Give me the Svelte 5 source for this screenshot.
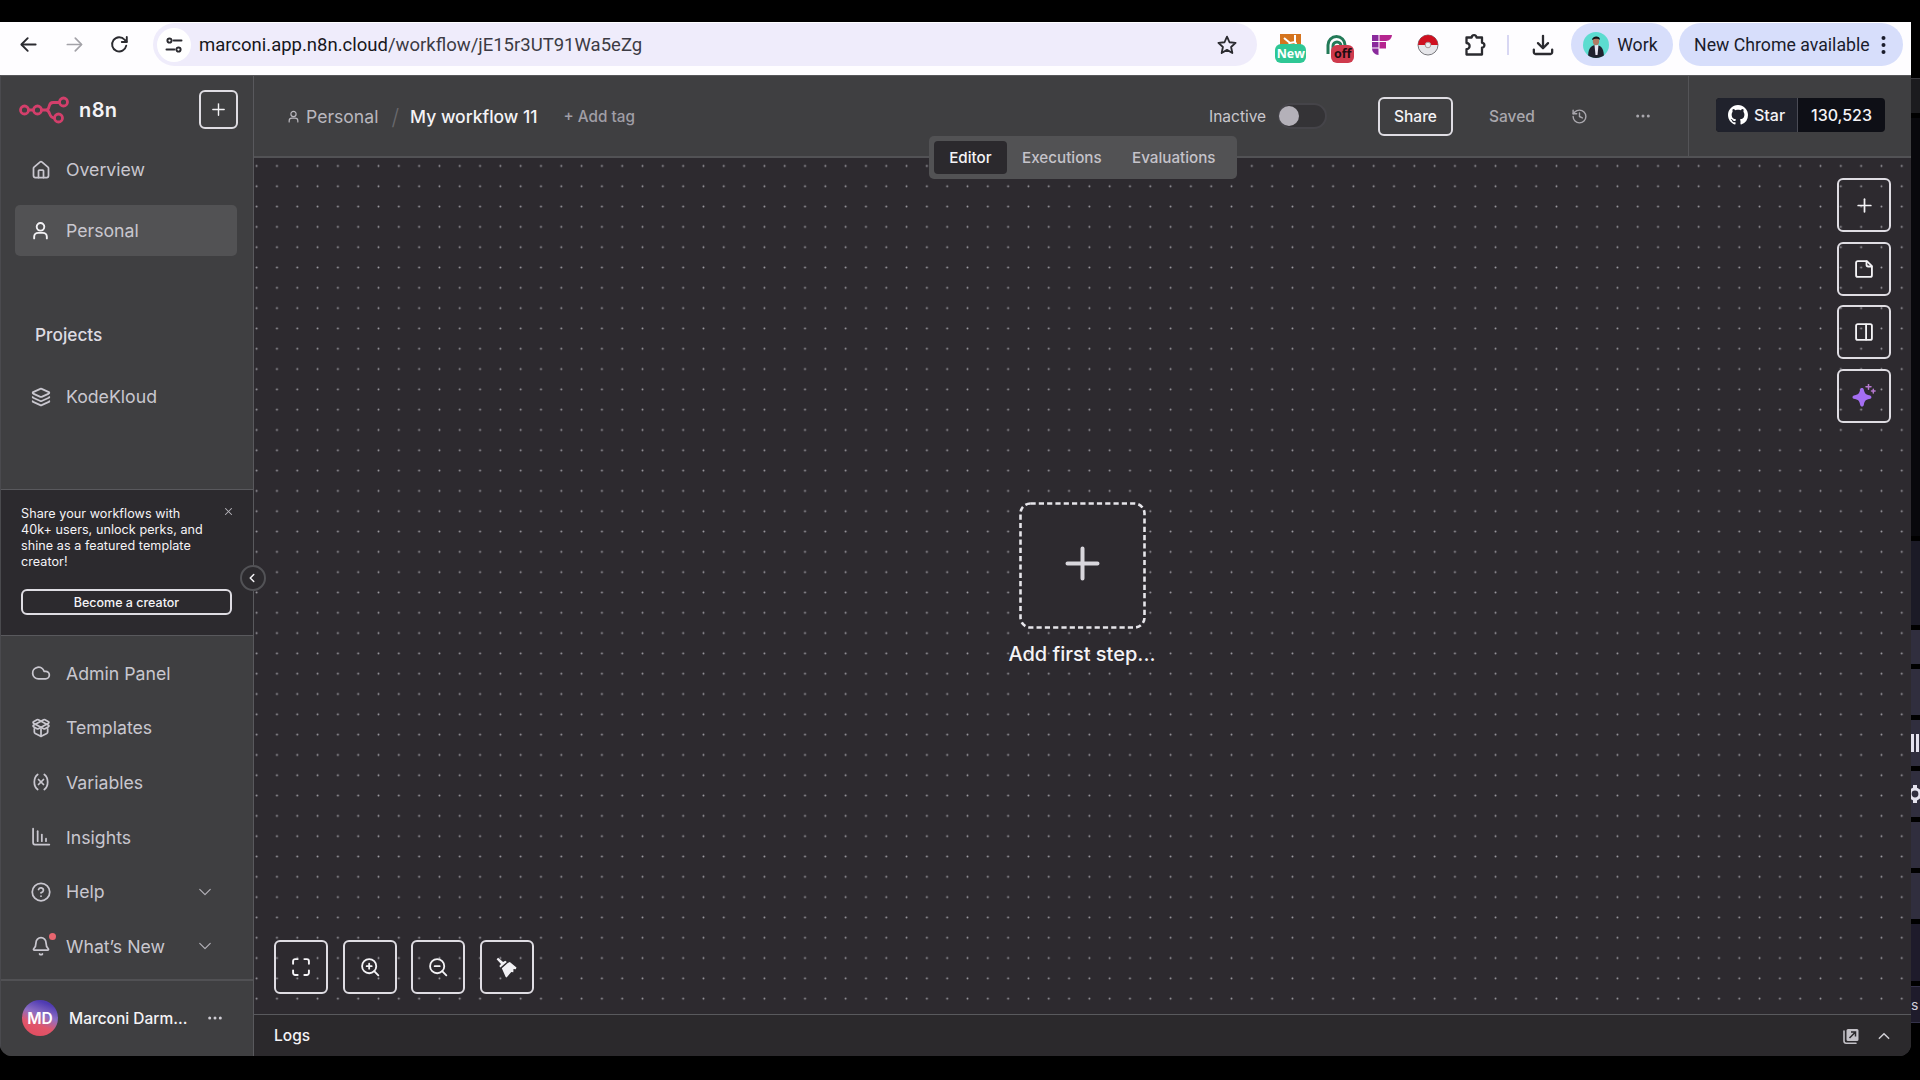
<script lang="ts">
  interface NavItem {
    icon: string;
    label: string;
    expandable?: boolean;
    dot?: boolean;
  }

  // 24x24 stroke icons
  const icons: Record<string, string[]> = {
    home: ['M15 21v-8a1 1 0 0 0-1-1h-4a1 1 0 0 0-1 1v8', 'M3 10a2 2 0 0 1 .7-1.5l7-6a2 2 0 0 1 2.6 0l7 6A2 2 0 0 1 21 10v9a2 2 0 0 1-2 2H5a2 2 0 0 1-2-2z'],
    user: ['M12 2.5a4.8 4.8 0 1 0 0 9.6a4.8 4.8 0 1 0 0-9.6', 'M4 22v-2a5 5 0 0 1 5-5h6a5 5 0 0 1 5 5v2'],
    layers: ['m12.8 2.2a2 2 0 0 0-1.6 0L2.6 6.1a1 1 0 0 0 0 1.8l8.6 3.9a2 2 0 0 0 1.6 0l8.6-3.9a1 1 0 0 0 0-1.8Z', 'M2 12a1 1 0 0 0 .6.9l8.6 3.9a2 2 0 0 0 1.6 0l8.6-3.9A1 1 0 0 0 22 12', 'M2 17a1 1 0 0 0 .6.9l8.6 3.9a2 2 0 0 0 1.6 0l8.6-3.9A1 1 0 0 0 22 17'],
    cloud: ['M17.5 19H9a7 7 0 1 1 6.7-9h1.8a4.5 4.5 0 1 1 0 9Z'],
    box: ['M12 22v-9', 'M15.2 2.2a1.7 1.7 0 0 1 1.6 0L21 4.6a.9.9 0 0 1 0 1.6L8.8 12.8a1.7 1.7 0 0 1-1.6 0L3 10.4a.9.9 0 0 1 0-1.6z', 'M20 13v3.9a2 2 0 0 1-1.1 1.8l-6 3a1.9 1.9 0 0 1-1.8 0l-6-3A2 2 0 0 1 4 16.9V13', 'M21 10.4a.9.9 0 0 0 0-1.6L8.8 2.2a1.8 1.8 0 0 0-1.6 0L3 4.6a.9.9 0 0 0 0 1.6l12.2 6.6a1.8 1.8 0 0 0 1.6 0z'],
    variable: ['M8 21s-4-3-4-9 4-9 4-9', 'M16 3s4 3 4 9-4 9-4 9', 'M15 9l-6 6', 'M9 9l6 6'],
    chart: ['M2.5 2v17a2 2 0 0 0 2 2H22', 'M8 17V5', 'M13 17V9', 'M18 17v-3'],
    help: ['M12 1.5a10.5 10.5 0 1 0 0 21a10.5 10.5 0 1 0 0-21', 'M9.1 9a3 3 0 0 1 5.8 1c0 2-3 3-3 3', 'M12 17h.01'],
    bell: ['M10.3 21.5a2 2 0 0 0 3.4 0', 'M3.3 15.3A1 1 0 0 0 4 17h16a1 1 0 0 0 .7-1.7C19.4 14 18 12.5 18 8A6 6 0 0 0 6 8c0 4.5-1.4 6-2.7 7.3'],
    plus: ['M4 12h16', 'M12 4v16'],
    note: ['M15.5 2.5H4.5a2 2 0 0 0-2 2v15a2 2 0 0 0 2 2h15a2 2 0 0 0 2-2V8.5Z', 'M15 3v4a2 2 0 0 0 2 2h4'],
    panel: ['M4.5 2.5h15a2 2 0 0 1 2 2v15a2 2 0 0 1-2 2h-15a2 2 0 0 1-2-2v-15a2 2 0 0 1 2-2z', 'M14.5 3v18'],
    fit: ['M8 2.5H5a2.5 2.5 0 0 0-2.5 2.5v3', 'M21.5 8V5A2.5 2.5 0 0 0 19 2.5h-3', 'M2.5 16v3A2.5 2.5 0 0 0 5 21.5h3', 'M16 21.5h3a2.5 2.5 0 0 0 2.5-2.5v-3'],
    zoomIn: ['M11 2.5a8.5 8.5 0 1 0 0 17a8.5 8.5 0 1 0 0-17', 'M22 22l-5-5', 'M11 8v6', 'M8 11h6'],
    zoomOut: ['M11 2.5a8.5 8.5 0 1 0 0 17a8.5 8.5 0 1 0 0-17', 'M22 22l-5-5', 'M8 11h6'],
    history: ['M3 12a9 9 0 1 0 9-9 9.7 9.7 0 0 0-6.7 2.7L3 8', 'M3 3v5h5', 'M12 7v5l4 2'],
    chevronDown: ['m3 7.5 9 9 9-9'],
    chevronUp: ['m4 16 8-8 8 8'],
    chevronLeft: ['m15 18-6-6 6-6'],
    close: ['M20 4 4 20', 'm4 4 16 16'],
    back: ['M21 12H4', 'm11 4-8 8 8 8'],
    forward: ['M3 12h17', 'm13 4 8 8-8 8'],
    reload: ['M20.5 13.5A9 9 0 1 1 18.5 6L21 8.5', 'M21.2 2.5v6.3h-6.3'],
    star: ['m12 2 3 6.7 7.3.8-5.4 4.9 1.5 7.2L12 17.9l-6.4 3.7 1.5-7.2L1.7 9.5l7.3-.8z'],
    puzzle: ['M3.5 4.5h5.2a2.4 2.4 0 0 1 4.8 0H19v5.3a2.4 2.4 0 0 1 0 4.8V21.5H3.5v-5.3a3.1 3.1 0 0 0 0-6.2z'],
    download: ['M12 2v13', 'm6.5 10 5.5 5.5 5.5-5.5', 'M2 17v3a1.8 1.8 0 0 0 1.8 1.8h16.4A1.8 1.8 0 0 0 22 20v-3'],
    tune: ['M11.5 6H22', 'M2 18h10.5', 'M6 3.2a2.8 2.8 0 1 0 0 5.6a2.8 2.8 0 1 0 0-5.6', 'M18 15.2a2.8 2.8 0 1 0 0 5.6a2.8 2.8 0 1 0 0-5.6'],
  };

  const bottomNav: NavItem[] = [
    { icon: 'cloud', label: 'Admin Panel' },
    { icon: 'box', label: 'Templates' },
    { icon: 'variable', label: 'Variables' },
    { icon: 'chart', label: 'Insights' },
    { icon: 'help', label: 'Help', expandable: true },
    { icon: 'bell', label: 'What’s New', expandable: true, dot: true },
  ];

  const tabs = ['Editor', 'Executions', 'Evaluations'];
  let activeTab = $state('Editor');
  let active = $state(false);
</script>

{#snippet icon(name: string, size: number, stroke = 2)}
  <svg class="icon" width={size} height={size} viewBox="0 0 24 24" fill="none" stroke="currentColor"
       stroke-width={stroke} stroke-linecap="round" stroke-linejoin="round" aria-hidden="true">
    {#each icons[name] as d}
      <path {d} />
    {/each}
  </svg>
{/snippet}

{#snippet dots(size: number)}
  <svg class="icon" width={size} height={size} viewBox="0 0 14 14" fill="currentColor" aria-hidden="true">
    <circle cx="1.7" cy="7" r="1.5" />
    <circle cx="7" cy="7" r="1.5" />
    <circle cx="12.3" cy="7" r="1.5" />
  </svg>
{/snippet}

{#snippet navItem(item: NavItem)}
  <a class="nav-item" href="#{item.icon}">
    <span class="nav-item__icon">
      {@render icon(item.icon, 20, 2.1)}
      {#if item.dot}<span class="nav-item__dot"></span>{/if}
    </span>
    <span class="nav-item__label">{item.label}</span>
    {#if item.expandable}
      <span class="nav-item__chevron">{@render icon('chevronDown', 14, 2)}</span>
    {/if}
  </a>
{/snippet}

<div class="screen">
  <div class="window">
    <!-- Browser toolbar -->
    <div class="chrome">
      <div class="chrome__nav">
        {@render icon('back', 19, 2.4)}
        <span class="muted">{@render icon('forward', 19, 2.2)}</span>
        {@render icon('reload', 19, 2.4)}
      </div>
      <div class="omnibox">
        <span class="omnibox__site">{@render icon('tune', 18, 2.6)}</span>
        <span class="omnibox__url">marconi.app.n8n.cloud<span>/workflow/jE15r3UT91Wa5eZg</span></span>
        {@render icon('star', 20, 2.2)}
      </div>
      <div class="extensions">
        <span class="ext ext--new">
          <svg width="21" height="20" viewBox="0 0 21 20">
            <rect width="21" height="20" fill="#d5741f" />
            <path d="M4 4l6 5 5-1V1M15 8l2 4M10 9l-3 4" stroke="#fff" stroke-width="2" fill="none" />
          </svg>
          <b>New</b>
        </span>
        <span class="ext ext--off">
          <svg width="22" height="22" viewBox="0 0 22 22" fill="none" stroke="#237a58" stroke-width="3">
            <path d="M2 20v-9a8.5 8.5 0 0 1 17 0" />
            <path d="M7 18v-6a4 4 0 0 1 8 0" />
          </svg>
          <b>off</b>
        </span>
        <svg class="ext" width="20" height="20" viewBox="0 0 20 20">
          <path d="M0 0h6.5v6H0zM0 7h6.5v5.5H0zM0 13.500h6.500V20A6.500 6.500 0 0 1 0 13.500z" fill="#8a2a9c" />
          <path d="M7.500 0H20a6 6 0 0 1-6 6H7.500zM7.500 7H14v6.500H7.500z" fill="#b5258f" />
        </svg>
        <svg class="ext" width="22" height="22" viewBox="0 0 22 22">
          <circle cx="11" cy="11" r="10" fill="#e6e6ea" stroke="#77777c" stroke-width="1" />
          <path d="M1 11a10 10 0 0 1 20 0z" fill="#cf1020" />
          <circle cx="11" cy="11" r="2.8" fill="#ececf0" stroke="#a99" stroke-width="1" />
        </svg>
        {@render icon('puzzle', 24, 2.3)}
      </div>
      <span class="chrome__sep"></span>
      <span class="chrome__download">{@render icon('download', 22, 2.5)}</span>
      <div class="profile">
        <svg width="26" height="26" viewBox="0 0 26 26">
          <defs><clipPath id="face"><circle cx="13" cy="13" r="13" /></clipPath></defs>
          <g clip-path="url(#face)">
            <rect width="26" height="26" fill="#5cdcd0" />
            <path d="M5 26c0-8 2-13 8-13s8 5 8 13z" fill="#20212f" />
            <path d="M11.5 13h4l-1 10h-2z" fill="#e8e6f4" />
            <ellipse cx="13" cy="9" rx="3.2" ry="4.2" fill="#b07a64" />
            <path d="M9 8c0-4 8-5 8 0-3-2-5-1-8 0z" fill="#151217" />
          </g>
        </svg>
        <span>Work</span>
      </div>
      <div class="update">
        <span>New Chrome available</span>
        <svg width="5" height="20" viewBox="0 0 5 20" fill="currentColor">
          <circle cx="2.5" cy="3" r="2" /><circle cx="2.5" cy="10" r="2" /><circle cx="2.5" cy="17" r="2" />
        </svg>
      </div>
    </div>

    <div class="app">
      <aside class="sidebar">
        <div class="brand">
          <svg width="51" height="28" viewBox="0 0 51 28" fill="none" stroke="#d33f6b" stroke-width="2.8">
            <circle cx="5.5" cy="14" r="4" />
            <circle cx="18.5" cy="14" r="4" />
            <circle cx="44.5" cy="6" r="4" />
            <circle cx="39.5" cy="22" r="4" />
            <path d="M9.5 14h5M22.5 14h4.500c5 0 1-7.500 7-7.500h6.500M27 14c5 0 2 8 8.500 8" />
          </svg>
          <span class="brand__name">n8n</span>
          <button class="outline brand__add" type="button" aria-label="Create">{@render icon('plus', 17, 2)}</button>
        </div>

        <nav class="nav nav--top">
          <a class="nav-item" href="#home">
            <span class="nav-item__icon">{@render icon('home', 20, 2.1)}</span>
            <span class="nav-item__label">Overview</span>
          </a>
          <a class="nav-item is-active" href="#user">
            <span class="nav-item__icon">{@render icon('user', 19, 2.4)}</span>
            <span class="nav-item__label">Personal</span>
          </a>
        </nav>

        <h2 class="projects">Projects</h2>
        <nav class="nav">
          {@render navItem({ icon: 'layers', label: 'KodeKloud' })}
        </nav>

        <div class="promo">
          <div class="promo__head">
            <p>Share your workflows with 40k+ users, unlock perks, and shine as a featured template creator!</p>
            <span class="promo__close">{@render icon('close', 9, 2.8)}</span>
          </div>
          <button class="outline promo__btn" type="button">Become a creator</button>
        </div>

        <nav class="nav nav--bottom">
          {#each bottomNav as item}
            {@render navItem(item)}
          {/each}
        </nav>

        <div class="account">
          <span class="account__avatar">MD</span>
          <span class="account__name">Marconi Darm...</span>
          {@render dots(14)}
        </div>

        <button class="collapse" type="button" aria-label="Collapse">{@render icon('chevronLeft', 14, 2.6)}</button>
      </aside>

      <main class="main">
        <header class="header">
          <div class="crumbs">
            {@render icon('user', 13, 2.2)}
            <span class="crumbs__owner">Personal</span>
            <span class="crumbs__slash">/</span>
            <span class="crumbs__title">My workflow 11</span>
            <span class="crumbs__tag">+ Add tag</span>
          </div>
          <div class="actions">
            <span class="actions__state">Inactive</span>
            <button class="switch" class:is-on={active} type="button" aria-label="Activate" onclick={() => (active = !active)}><span></span></button>
            <button class="outline actions__share" type="button">Share</button>
            <span class="actions__saved">Saved</span>
            <span class="actions__history">{@render icon('history', 17, 2)}</span>
            {@render dots(14)}
          </div>
          <div class="github">
            <div class="github__badge">
              <span class="github__star">
                <svg width="20" height="20" viewBox="0 0 16 16" fill="#fff">
                  <path d="M8 0C3.58 0 0 3.58 0 8c0 3.54 2.29 6.53 5.47 7.59.4.07.55-.17.55-.38 0-.19-.01-.82-.01-1.49-2.01.37-2.53-.49-2.69-.94-.09-.23-.48-.94-.82-1.13-.28-.15-.68-.52-.01-.53.63-.01 1.08.58 1.23.82.72 1.21 1.87.87 2.33.66.07-.52.28-.87.51-1.07-1.78-.2-3.64-.89-3.64-3.95 0-.87.31-1.59.82-2.15-.08-.2-.36-1.02.08-2.12 0 0 .67-.21 2.2.82.64-.18 1.32-.27 2-.27s1.36.09 2 .27c1.53-1.04 2.2-.82 2.2-.82.44 1.1.16 1.92.08 2.12.51.56.82 1.27.82 2.15 0 3.07-1.87 3.75-3.65 3.95.29.25.54.73.54 1.48 0 1.07-.01 1.93-.01 2.2 0 .21.15.46.55.38A8 8 0 0 0 16 8c0-4.420-3.580-8-8-8z" />
                </svg>
                Star
              </span>
              <span class="github__count">130,523</span>
            </div>
          </div>
        </header>

        <section class="canvas">
          <svg class="canvas__grid" aria-hidden="true">
            <defs>
              <pattern id="grid" x="-7.5" y="-2.2" width="20.31" height="20.31" patternUnits="userSpaceOnUse">
                <circle cx="10.15" cy="10.15" r="0.95" fill="#a09ea5" />
              </pattern>
            </defs>
            <rect width="100%" height="100%" fill="url(#grid)" />
          </svg>

          <div class="tabs" role="tablist">
            {#each tabs as tab}
              <button class="tabs__item" class:is-active={tab === activeTab} type="button" role="tab"
                      aria-selected={tab === activeTab} onclick={() => (activeTab = tab)}>{tab}</button>
            {/each}
          </div>

          <div class="first-step">
            <button class="first-step__box" type="button" aria-label="Add first step">
              <svg width="127" height="127" viewBox="0 0 127 127" fill="none">
                <rect x="1.5" y="1.5" width="124" height="124" rx="10" fill="#2d2a2f" stroke="#e6e5ea"
                      stroke-width="2.6" stroke-dasharray="5.200 3.100" />
                <path d="M63.500 46.500v30M48.500 61.500h30" stroke="#d8d6dc" stroke-width="4" stroke-linecap="round" />
              </svg>
            </button>
            <span>Add first step...</span>
          </div>

          <div class="tools tools--side">
            <button class="outline tool" type="button" aria-label="Add node">{@render icon('plus', 19, 2.2)}</button>
            <button class="outline tool" type="button" aria-label="Add sticky note">{@render icon('note', 20, 2.2)}</button>
            <button class="outline tool" type="button" aria-label="Toggle panel">{@render icon('panel', 20, 2.2)}</button>
            <button class="outline tool" type="button" aria-label="Assistant">
              <svg width="24" height="24" viewBox="0 0 24 24">
                <path d="M10 4c1.200 0 1.500.600 1.900 2 1 3.700 1.700 4.400 5.300 5.300 1.500.4 2.200.8 2.200 1.900s-.7 1.500-2.200 1.900c-3.600.9-4.300 1.600-5.300 5.300-.4 1.400-.7 2.200-1.900 2.200s-1.500-.8-1.900-2.200c-1-3.700-1.700-4.400-5.300-5.300C1.300 14.700.5 14.300.5 13.200s.8-1.500 2.300-1.900c3.600-.9 4.300-1.600 5.300-5.300C8.500 4.600 8.800 4 10 4z" fill="#a46ef2" />
                <path d="M16.500.2v5M14 2.700h5M21.300 5.300v3.600M19.500 7.100h3.600" stroke="#b779cf" stroke-width="1.500" stroke-linecap="round" />
              </svg>
            </button>
          </div>

          <div class="tools tools--bottom">
            <button class="outline tool" type="button" aria-label="Fit view">{@render icon('fit', 20, 2.3)}</button>
            <button class="outline tool" type="button" aria-label="Zoom in">{@render icon('zoomIn', 20, 2.2)}</button>
            <button class="outline tool" type="button" aria-label="Zoom out">{@render icon('zoomOut', 20, 2.2)}</button>
            <button class="outline tool" type="button" aria-label="Tidy up">
              <svg width="21" height="21" viewBox="0 0 21 21" fill="#f1f0f4">
                <path d="M.6 2.300 2.100.7l5 4.200 2.200-1.200 1.500 1.400-6.400 5.300-1.100-1.500 1.700-2z" />
                <path d="m11.800 6 2-.9 6.700 5.500-.7 1.700-2.300-.3-.2 3.300-2-.4-4.700 5.500-.9-.3-3.900-8.800z" />
              </svg>
            </button>
          </div>
        </section>

        <footer class="logs">
          <span>Logs</span>
          <svg class="logs__pop" width="16" height="16" viewBox="0 0 16 16">
            <path d="M5 1h9a1.500 1.500 0 0 1 1.500 1.500v9A1.500 1.500 0 0 1 14 13H5a1.500 1.500 0 0 1-1.500-1.500v-9A1.500 1.500 0 0 1 5 1z" fill="#c3c1c7" />
            <path d="M1 3v10a2.200 2.200 0 0 0 2.200 2.200H13" fill="none" stroke="#c3c1c7" stroke-width="1.600" stroke-linecap="round" />
            <path d="M6.500 10 12 4.500M8 4h4.500v4.500" fill="none" stroke="#2b292c" stroke-width="1.500" />
          </svg>
          {@render icon('chevronUp', 14, 2.6)}
        </footer>
      </main>
    </div>
  </div>

  <!-- Strip of the window behind -->
  <div class="behind">
    <div class="behind__bar"></div>
    <div class="behind__gap"></div>
    <div class="behind__fade"></div>
    <div class="behind__cell behind__cell--short"></div>
    <div class="behind__cell"></div>
    <div class="behind__cell"><i></i><i></i></div>
    <div class="behind__cell">
      <svg width="9" height="18" viewBox="0 0 9 18" fill="none" stroke="#e4e2ee">
        <circle cx="4" cy="9" r="5" stroke-width="3.2" />
        <path d="M4 0v3M4 15v3" stroke-width="4" />
      </svg>
    </div>
    <div class="behind__cell"></div>
    <div class="behind__cell"></div>
    <div class="behind__foot"></div>
    <div class="behind__label">s</div>
  </div>
</div>

<style>
  :global(body) {
    background: #000;
    overflow: hidden;
  }

  .screen {
    display: flex;
    width: 1920px;
    height: 1080px;
    padding: 22px 0 24px;
    box-sizing: border-box;
    background: #000;
    color: #f4f3f6;
    font-family: Inter, "Liberation Sans", sans-serif;
  }

  .screen :is(div, button, a, span, aside, header, footer) {
    box-sizing: border-box;
  }

  .icon {
    display: block;
    flex: none;
  }

  button {
    padding: 0;
    border: 0;
    background: none;
    color: inherit;
    font: inherit;
  }

  .window {
    display: flex;
    flex-direction: column;
    width: 1911px;
    height: 1034px;
    border-radius: 0 0 12px 12px;
    overflow: hidden;
  }

  /* ---- Browser toolbar ---- */
  .chrome {
    display: flex;
    align-items: center;
    height: 53px;
    padding: 0 8px 8px 0;
    background: #fefdff;
    color: #2b2b30;
    font-family: Roboto, "Liberation Sans", sans-serif;
    font-size: 17.7px;
    flex: none;
  }

  .chrome__nav {
    display: flex;
    gap: 26.5px;
    width: 153px;
    padding-left: 19px;
  }

  .muted {
    color: #a3a2a8;
  }

  .omnibox {
    display: flex;
    align-items: center;
    width: 1105px;
    height: 43px;
    padding: 0 20px 0 4px;
    border-radius: 22px;
    background: #efecfb;
  }

  .omnibox__site {
    display: grid;
    place-items: center;
    width: 34px;
    height: 34px;
    border-radius: 50%;
    background: #fff;
  }

  .omnibox__url {
    flex: 1;
    padding-left: 8px;
    color: #17171c;
    font-size: 18.5px;
  }

  .omnibox__url span {
    color: #3c3b44;
  }

  .extensions {
    display: flex;
    align-items: center;
    width: 250px;
    padding-left: 18px;
  }

  .ext {
    display: block;
    flex: none;
  }

  .ext--new,
  .ext--off {
    position: relative;
    height: 22px;
    width: 31px;
    text-align: center;
  }

  .ext--off {
    width: 28px;
    margin: 0 18px 0 20px;
    text-align: left;
  }

  .ext b {
    position: absolute;
    left: 0;
    top: 10px;
    width: 31px;
    height: 19px;
    border-radius: 6px;
    background: #2fc795;
    color: #fff;
    font: 700 12.5px/19px "Open Sans", sans-serif;
    text-align: center;
  }

  .ext--off b {
    left: 5px;
    top: 11px;
    width: 23px;
    height: 18px;
    background: #cf3a4d;
    color: #1d0c10;
    line-height: 17px;
  }

  .extensions > svg:nth-of-type(2) {
    margin: 0 24px 0 25px;
  }

  .chrome__sep {
    width: 2px;
    height: 20px;
    background: #d8d7f3;
  }

  .chrome__download {
    margin: 0 17px 0 23px;
  }

  .profile,
  .update {
    display: flex;
    align-items: center;
    height: 43px;
    border-radius: 22px;
    background: #d7defb;
    color: #1a1c2c;
    white-space: nowrap;
  }

  .profile {
    gap: 8px;
    width: 102px;
    padding-left: 12px;
  }

  .update {
    justify-content: space-between;
    width: 224px;
    margin-left: 6px;
    padding: 0 17px 0 15px;
  }

  /* ---- App shell ---- */
  .app {
    display: flex;
    flex: 1;
    min-height: 0;
    background: #3f3f41;
  }

  .outline {
    display: grid;
    place-items: center;
    border: 2px solid #dfdde3;
    border-radius: 6px;
  }

  .sidebar {
    position: relative;
    display: flex;
    flex-direction: column;
    width: 254px;
    flex: none;
    border-top: 1px solid #57575a;
    border-right: 1px solid #59595d;
    border-left: 1px solid #4a4a4e;
    background: #3f3f41;
  }

  .brand {
    display: flex;
    align-items: center;
    height: 39px;
    margin: 14px 15px 15px 18px;
  }

  .brand__name {
    flex: 1;
    padding-left: 9px;
    font-size: 20px;
    font-weight: 600;
    letter-spacing: 0.4px;
  }

  .brand__add {
    width: 39px;
    height: 39px;
  }

  .nav {
    display: flex;
    flex-direction: column;
    padding: 0 16px 0 14px;
  }

  .nav--top {
    gap: 10px;
  }

  .nav-item {
    display: flex;
    align-items: center;
    height: 51px;
    padding: 0 25px 0 15px;
    border-radius: 5px;
    color: #c9c7cf;
    font-size: 17.7px;
    text-decoration: none;
  }

  .nav-item.is-active {
    background: #525254;
  }

  .is-active .nav-item__icon {
    color: #f2f1f4;
  }

  .nav-item__icon {
    position: relative;
    display: grid;
    place-items: center;
    width: 21px;
    margin-right: 15px;
  }

  .nav-item__label {
    flex: 1;
  }

  .nav-item__chevron {
    color: #b3b1b8;
  }

  .nav-item__dot {
    position: absolute;
    top: -3px;
    right: -5px;
    width: 7px;
    height: 7px;
    border-radius: 50%;
    background: #e8666f;
  }

  .projects {
    margin: 68px 0 25px 34px;
    color: #dddbe1;
    font-size: 17.3px;
    font-weight: 500;
    line-height: 22px;
  }

  .promo {
    height: 147px;
    margin-top: 67px;
    padding: 16px 20px 0;
    border: solid #59595d;
    border-width: 1px 0;
    background: #2c2a2e;
  }

  .promo__head {
    display: flex;
    justify-content: space-between;
    height: 83px;
  }

  .promo__head p {
    width: 188px;
    margin: 0;
    font-size: 12.6px;
    line-height: 15.9px;
    letter-spacing: 0.05px;
  }

  .promo__close {
    padding: 1px 0 0;
    color: #b9b7bd;
  }

  .promo__btn {
    width: 211px;
    height: 26px;
    font-size: 12.5px;
    font-weight: 500;
  }

  .nav--bottom {
    flex: 1;
    padding-top: 10px;
  }

  .nav--bottom .nav-item {
    height: 54.6px;
  }

  .account {
    display: flex;
    align-items: center;
    height: 77px;
    padding: 0 31px 1px 21px;
    border-top: 2px solid #515154;
    color: #cfcdd4;
  }

  .account__avatar {
    display: grid;
    place-items: center;
    width: 36px;
    height: 36px;
    border-radius: 50%;
    background: linear-gradient(200deg, #4f3bb2 15%, #8d6fc4 42%, #e0566b 66%, #e24a5c);
    color: #fff;
    font-size: 15.5px;
    font-weight: 600;
  }

  .account__name {
    flex: 1;
    padding-left: 11px;
    color: #f4f3f6;
    font-size: 15.5px;
    font-weight: 500;
    white-space: nowrap;
  }

  /* sits across the sidebar edge */
  .collapse {
    position: absolute;
    top: 489px;
    right: -13px;
    z-index: 2;
    display: grid;
    place-items: center;
    width: 26px;
    height: 26px;
    padding-right: 2px;
    border: 2px solid #525256;
    border-radius: 50%;
    background: #2c2a2e;
  }

  /* ---- Main ---- */
  .main {
    display: flex;
    flex-direction: column;
    flex: 1;
    min-width: 0;
  }

  .header {
    display: flex;
    height: 83px;
    border-top: 1px solid #57575a;
    border-bottom: 2px solid #525255;
    flex: none;
    font-weight: 500;
  }

  .crumbs {
    display: flex;
    align-items: center;
    flex: 1;
    padding: 1px 0 0 33px;
    color: #b9b7be;
    white-space: nowrap;
  }

  .crumbs__owner {
    padding-left: 6px;
    font-size: 17.6px;
    font-weight: 400;
  }

  .crumbs__slash {
    padding: 0 11px 0 13px;
    color: #69696d;
    font-size: 22px;
    font-weight: 300;
  }

  .crumbs__title {
    color: #f4f3f6;
    font-size: 17.5px;
  }

  .crumbs__tag {
    padding-left: 26px;
    color: #a09ea6;
    font-size: 15.3px;
  }

  .actions {
    display: flex;
    align-items: center;
    width: 480px;
    color: #a9a7ad;
    font-size: 15.5px;
  }

  .actions__state {
    width: 70px;
    padding-left: 1px;
    color: #c9c7cd;
  }

  .actions__state {
    font-weight: 400;
  }

  .switch {
    width: 49px;
    height: 26px;
    padding: 2px 1px;
    border: 2px solid #454449;
    border-radius: 13px;
    background: #343336;
  }

  .switch span {
    display: block;
    width: 20px;
    height: 20px;
    margin: -1px 0 0 -2px;
    border-radius: 50%;
    background: #b4b1b9;
  }

  .switch.is-on {
    background: #35a36f;
  }

  .actions__share {
    width: 75px;
    height: 39px;
    margin: 0 36px 0 51px;
    color: #f4f3f6;
  }

  .actions__saved {
    width: 82px;
  }

  .actions__history {
    width: 65px;
  }

  .github {
    width: 223px;
    padding: 22px 0 0 27px;
    border-left: 1px solid #545457;
  }

  .github__badge {
    display: flex;
    width: 169px;
    height: 34px;
    border-radius: 4px;
    overflow: hidden;
    background: #0e0f16;
    color: #f4f3f6;
    font-size: 16px;
  }

  .github__star {
    display: flex;
    align-items: center;
    gap: 6px;
    width: 82px;
    padding-left: 12px;
    border-right: 1px solid #4a4b55;
    background: #20222c;
  }

  .github__count {
    flex: 1;
    line-height: 34px;
    text-align: center;
  }

  /* ---- Canvas ---- */
  .canvas {
    position: relative;
    flex: 1;
    background: #2d2a2f;
  }

  .canvas__grid {
    display: block;
    position: absolute;
    inset: 0;
    width: 100%;
    height: 100%;
  }

  .tabs {
    position: absolute;
    top: -22px;
    left: 675px;
    display: flex;
    width: 308px;
    height: 43px;
    padding: 5px;
    border-radius: 5px;
    background: #525254;
    color: #c5c3ca;
    font-size: 15.2px;
    font-weight: 500;
  }

  .tabs__item {
    padding: 0 15.2px;
    border-radius: 4px;
  }

  .tabs__item.is-active {
    background: #2b292d;
    color: #f4f3f6;
  }

  .first-step {
    position: absolute;
    top: 344px;
    left: 728px;
    display: flex;
    flex-direction: column;
    align-items: center;
    gap: 12px;
    width: 200px;
    font-size: 20px;
    font-weight: 500;
    line-height: 26px;
  }

  .first-step__box,
  .first-step__box svg {
    display: block;
  }

  .tools {
    position: absolute;
    display: flex;
  }

  .tools--side {
    top: 20px;
    right: 20px;
    flex-direction: column;
    gap: 9.5px;
  }

  .tools--bottom {
    left: 20px;
    bottom: 20px;
    gap: 14.6px;
  }

  .tool {
    width: 54px;
    height: 54px;
  }

  .logs {
    display: flex;
    align-items: center;
    height: 42px;
    padding: 0 20px;
    border-top: 1px solid #59595d;
    background: #2b292c;
    color: #cfcdd3;
    font-size: 15.5px;
    font-weight: 500;
    flex: none;
  }

  .logs span {
    flex: 1;
    color: #f4f3f6;
  }

  .logs__pop {
    margin-right: 18px;
  }

  /* ---- Window behind ---- */
  .behind {
    display: flex;
    flex-direction: column;
    gap: 5px;
    width: 9px;
    margin-top: 56px;
  }

  .behind > div {
    flex: none;
  }

  .behind__bar {
    height: 35px;
    border-top: 1px solid #3a3a40;
    background: #1b1b1e;
  }

  .behind__gap {
    height: 418px;
    background: #08080c;
  }

  .behind__fade {
    height: 84px;
    background: #1b1a26;
  }

  .behind__cell {
    display: flex;
    align-items: center;
    gap: 2px;
    height: 46px;
    background: #302e3e;
  }

  .behind__cell--short {
    height: 34px;
  }

  .behind__cell i {
    width: 3px;
    height: 18px;
    background: #e4e2ee;
  }

  .behind__foot {
    height: 57px;
    background: #1e1b2b;
  }

  .behind__label {
    height: 37px;
    border: solid #34324a;
    border-width: 1px 0;
    background: #1e1b2b;
    color: #cfcdd8;
    font-size: 14px;
    line-height: 36px;
  }
</style>
